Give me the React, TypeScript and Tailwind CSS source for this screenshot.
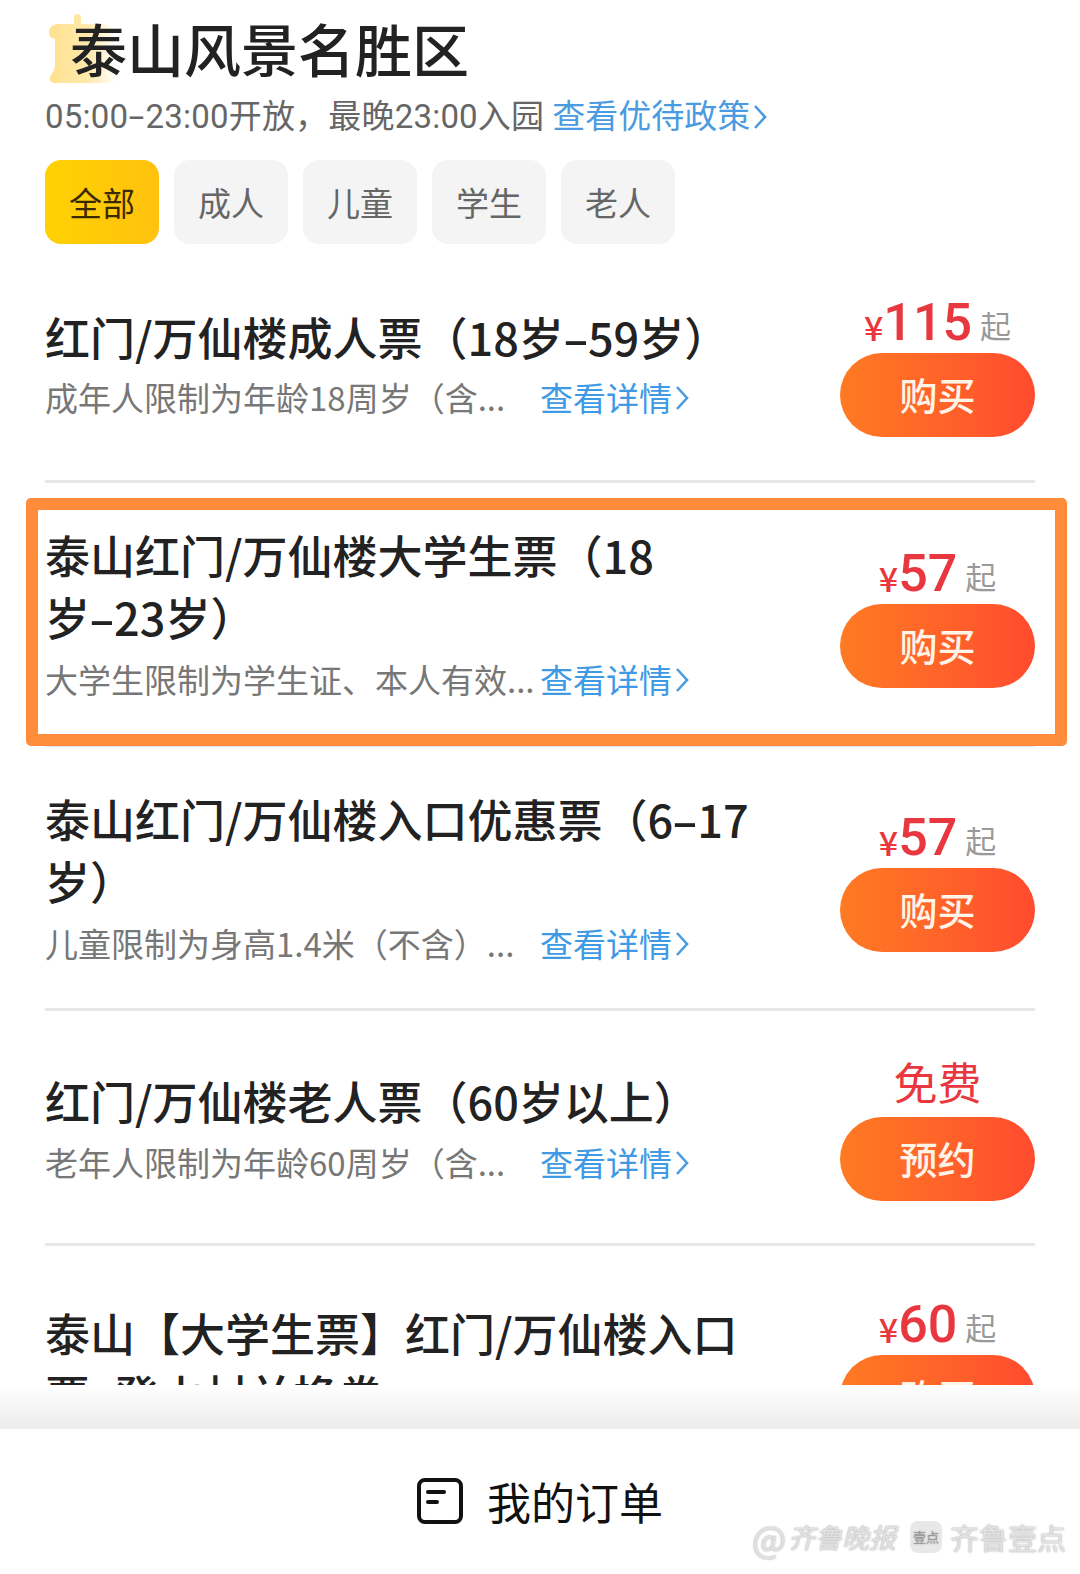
const tabs = ["全部", "成人", "儿童", "学生", "老人"];

const tickets = [
  {
    title: "红门/万仙楼成人票（18岁-59岁）",
    desc: "成年人限制为年龄18周岁（含...",
    price: "115",
    action: "购买",
    row: "h-[237px] pt-[60px]",
    side: "mt-[-14px]",
    sub: "h-[60px]",
    marked: false,
  },
  {
    title: "泰山红门/万仙楼大学生票（18\n岁-23岁）",
    desc: "大学生限制为学生证、本人有效...",
    price: "57",
    action: "购买",
    row: "h-[264px] pt-[41px]",
    side: "mt-[19px]",
    sub: "h-[63px]",
    marked: true,
  },
  {
    title: "泰山红门/万仙楼入口优惠票（6-17\n岁）",
    desc: "儿童限制为身高1.4米（不含）...",
    price: "57",
    action: "购买",
    row: "h-[264px] pt-[41px]",
    side: "mt-[19px]",
    sub: "h-[63px]",
    marked: false,
  },
  {
    title: "红门/万仙楼老人票（60岁以上）",
    desc: "老年人限制为年龄60周岁（含...",
    price: "",
    action: "预约",
    row: "h-[235px] pt-[59px]",
    side: "mt-[-14px]",
    sub: "h-[61px]",
    marked: false,
  },
  {
    title: "泰山【大学生票】红门/万仙楼入口\n票, 登山村并换券",
    desc: "大学生限制为学生证、本人有效...",
    price: "60",
    action: "购买",
    row: "h-[237px] pt-[56px]",
    side: "mt-[-8px]",
    sub: "h-[61px]",
    marked: false,
  },
];

const Chevron = () => (
  <svg width="14" height="28" viewBox="0 0 14 28" fill="none" className="ml-[3px] shrink-0">
    <path d="M2 3l10 11-10 11" stroke="#4a9be2" strokeWidth="2.6" />
  </svg>
);

// the hyphen in the reference is drawn much longer than the font's
const withLongDash = (text: string) =>
  text.split("-").map((part, index) => (
    <span key={index}>
      {index > 0 && <span className="mx-[4px] inline-block scale-x-[1.7]">-</span>}
      {part}
    </span>
  ));

const App = () => {
  return (
    <div className="flex h-[1574px] w-[1080px] flex-col overflow-hidden bg-white font-['Noto_Sans_CJK_SC','Noto_Sans',sans-serif]">
      <div className="h-[1385px] shrink-0 overflow-hidden px-[45px]">
        <div className="relative h-[94px] pl-[25px] pt-[8px]">
          <svg width="66" height="70" viewBox="0 0 66 70" className="absolute left-[3px] top-[13px]">
            <defs>
              <linearGradient id="peak" x1="0" x2="1" y1="0" y2="0">
                <stop offset="0" stopColor="#ffe28f" />
                <stop offset="0.6" stopColor="#ffe9ac" />
                <stop offset="1" stopColor="#fffdf5" />
              </linearGradient>
            </defs>
            <path
              d="M26 4c0-4 7-4 7 0v7h20c8 0 13 4 13 10v49H7c-4 0-6-3-5-6 3-5 5-8 5-12V26c-4 0-6-3-6-7 0-4 3-7 8-8h17z"
              fill="url(#peak)"
            />
          </svg>
          <h1 className="relative text-[57px] font-medium leading-[78px] text-[#222]">泰山风景名胜区</h1>
        </div>
        <div className="flex h-[46px] items-center text-[33px] text-[#666] font-['Roboto','Noto_Sans_CJK_SC',sans-serif]">
          <span className="tracking-[0.2px]">{withLongDash("05:00-23:00开放，最晚23:00入园")}</span>
          <span className="ml-[8px] text-[#4a9be2]">查看优待政策</span>
          <Chevron />
        </div>
        <div className="mt-[20px] flex gap-[15px]">
          {tabs.map((tab, index) => (
            <div
              key={tab}
              className={
                index === 0
                  ? "flex h-[84px] w-[114px] items-center justify-center rounded-[16px] bg-gradient-to-r from-[#ffd102] to-[#ffc20e] pt-[2px] text-[33px] text-[#3a2a00]"
                  : "flex h-[84px] w-[114px] items-center justify-center rounded-[16px] bg-[#f4f4f4] pt-[2px] text-[33px] text-[#666]"
              }
            >
              {tab}
            </div>
          ))}
        </div>
        <ul className="mt-[2px]">
          {tickets.map((ticket) => (
            <li key={ticket.title} className={`relative flex justify-between border-b-[3px] border-[#e8e8e8] ${ticket.row}`}>
              <div className="min-w-0">
                <h4 className="whitespace-pre-line text-[45px] font-medium leading-[62px] text-[#222]">
                  {withLongDash(ticket.title)}
                </h4>
                <div className={`flex items-center text-[33px] ${ticket.sub}`}>
                  <span className="w-[495px] whitespace-nowrap text-[#777]">{ticket.desc}</span>
                  <span className="text-[#3f9ae5]">查看详情</span>
                  <Chevron />
                </div>
              </div>
              <div className={`${ticket.side} w-[195px] shrink-0`}>
                <div className="flex h-[61px] items-end justify-center whitespace-nowrap">
                  {ticket.price ? (
                    <>
                      <span className="mb-[6px] text-[34px] font-medium leading-[40px] text-[#e8373f]">¥</span>
                      <span className="text-[52px] font-medium leading-[60px] text-[#e8373f] font-['Roboto',sans-serif]">
                        {ticket.price}
                      </span>
                      <span className="mb-[8px] ml-[8px] text-[31px] leading-[40px] text-[#999]">起</span>
                    </>
                  ) : (
                    <span className="mb-[6px] text-[44px] leading-[60px] text-[#e8373f]">免费</span>
                  )}
                </div>
                <button className="h-[84px] w-[195px] rounded-full bg-gradient-to-r from-[#ff7a22] to-[#ff4a2e] pb-[3px] text-[38px] font-medium text-[#fff4e8]">
                  {ticket.action}
                </button>
              </div>
              {ticket.marked && (
                <div className="absolute left-[-19px] right-[-32px] top-[15px] h-[248px] rounded-[5px] border-[12px] border-[#ff8c3a]" />
              )}
            </li>
          ))}
        </ul>
      </div>
      <div className="h-[44px] shrink-0 bg-gradient-to-b from-white to-[#ececec]" />
      <div className="relative flex flex-1 items-center justify-center gap-[24px] pb-[2px]">
        <svg width="46" height="46" viewBox="0 0 46 46" fill="none">
          <rect x="2" y="2" width="42" height="42" rx="6" stroke="#111" strokeWidth="4" />
          <path d="M11 14h16M11 24h9" stroke="#111" strokeWidth="4" strokeLinecap="round" />
        </svg>
        <span className="text-[44px] text-[#111]">我的订单</span>
        <div className="absolute bottom-[17px] right-[14px] flex items-center text-[#e2e2e2] [text-shadow:0_0_2px_#9a9a9a]">
          <span className="text-[36px] leading-[40px]">@</span>
          <span className="ml-[2px] text-[27px] italic leading-[40px]">齐鲁晚报</span>
          <span className="ml-[14px] flex h-[32px] w-[32px] items-center justify-center rounded-[8px] bg-[#e8e8e8] text-[13px] text-[#999]">
            壹点
          </span>
          <span className="ml-[8px] text-[29px] leading-[40px]">齐鲁壹点</span>
        </div>
      </div>
    </div>
  );
};

export default App;
